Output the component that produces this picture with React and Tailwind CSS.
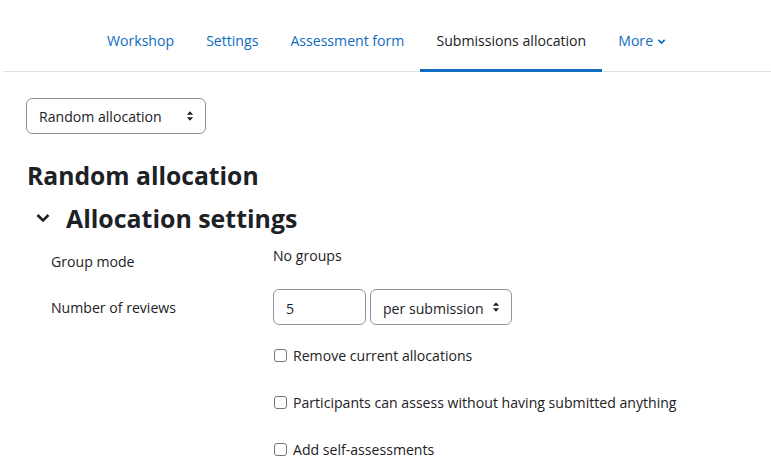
import React from 'react';

const tabs = [
  { label: 'Workshop' },
  { label: 'Settings' },
  { label: 'Assessment form' },
  { label: 'Submissions allocation', active: true },
];

function Updown({ className }) {
  return (
    <svg viewBox="0 0 10 14" className={className} fill="currentColor">
      <path d="M5 1.5 L8.6 5.5 H1.4 Z" />
      <path d="M5 12.5 L1.4 8.5 H8.6 Z" />
    </svg>
  );
}

function Check({ label }) {
  return (
    <label className="flex items-center gap-[6px] h-[24px]">
      <span className="w-[13px] h-[13px] rounded-[3px] border border-[#767676] bg-white shrink-0" />
      <span className="pt-[1px]">{label}</span>
    </label>
  );
}

export default function App() {
  return (
    <div
      className="w-[771px] h-[463px] overflow-hidden bg-white text-[#1d2125] text-[14.1px]"
      style={{ fontFamily: '"Open Sans", "Noto Sans", sans-serif' }}
    >
      {/* Secondary nav */}
      <div className="ml-[3px] border-b border-[#dee2e6] h-[72px] flex items-end pl-[88px]">
        {tabs.map((t) => (
          <div
            key={t.label}
            className={`px-[16px] h-[72px] flex items-center pt-[12px] border-b-[3px] -mb-px ${
              t.active ? 'border-[#0f6cbf] text-[#1d2125]' : 'border-transparent text-[#0f6cbf]'
            }`}
          >
            {t.label}
          </div>
        ))}
        <div className="px-[16px] h-[72px] flex items-center pt-[12px] text-[#0f6cbf] gap-[4px]">
          More
          <svg viewBox="0 0 10 10" className="w-[9px] h-[9px]" fill="none" stroke="currentColor" strokeWidth="2">
            <path d="M1.5 3.2 L5 6.7 L8.5 3.2" />
          </svg>
        </div>
      </div>

      <div className="pl-[26px] pt-[26px]">
        <div className="w-[180px] h-[36px] rounded-[6px] border border-[#8f959e] flex items-center justify-between pl-[12px] pr-[10px]">
          <span className="pt-[2px]">Random allocation</span>
          <Updown className="w-[10px] h-[12px]" />
        </div>

        <h2 className="mt-[26px] text-[24.7px] font-bold leading-[32px] ml-[1px]">Random allocation</h2>

        <div className="flex items-center mt-[7px] h-[38px]">
          <svg viewBox="0 0 16 16" className="w-[16px] h-[16px] ml-[9px]" fill="none" stroke="currentColor" strokeWidth="2.6">
            <path d="M2.5 5 L8 10.5 L13.5 5" />
          </svg>
          <h3 className="ml-[15px] text-[24.9px] font-bold leading-[34px]">Allocation settings</h3>
        </div>

        <div className="mt-[7px] flex">
          <div className="w-[247px] pl-[25px] pt-[7px]">Group mode</div>
          <div className="pt-[1px]">No groups</div>
        </div>

        <div className="mt-[17px] flex items-center">
          <div className="w-[247px] pl-[25px]">Number of reviews</div>
          <div className="w-[93px] h-[36px] rounded-[6px] border border-[#8f959e] flex items-center pl-[12px] pt-[2px]">5</div>
          <div className="ml-[4px] w-[142px] h-[36px] rounded-[6px] border border-[#8f959e] flex items-center justify-between pl-[12px] pr-[10px]">
            <span className="pt-[2px]">per submission</span>
            <Updown className="w-[10px] h-[12px]" />
          </div>
        </div>

        <div className="ml-[248px] mt-[18px] flex flex-col gap-[23px]">
          <Check label="Remove current allocations" />
          <Check label="Participants can assess without having submitted anything" />
          <Check label="Add self-assessments" />
        </div>
      </div>
    </div>
  );
}
